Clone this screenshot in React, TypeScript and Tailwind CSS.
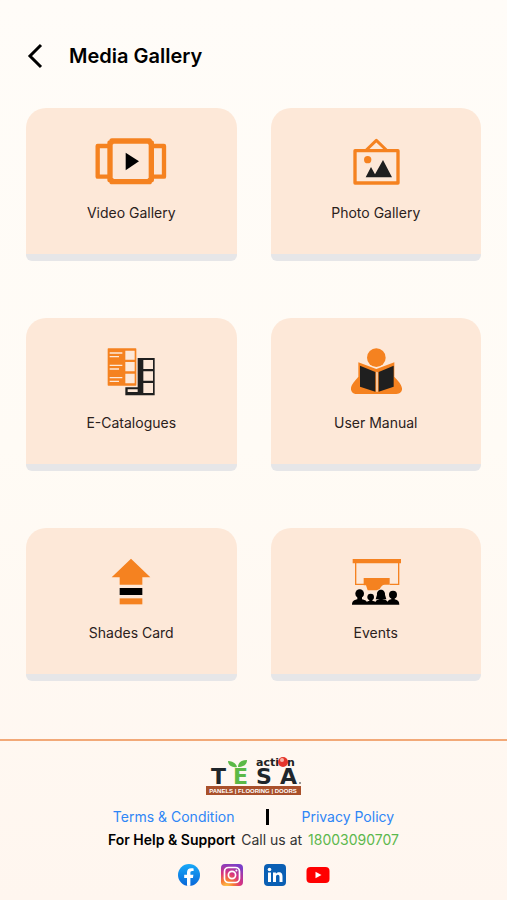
import React from 'react';

const VideoIcon = () => (
  <svg viewBox="0 0 216 144" className="w-[72px] h-12" fill="none" aria-hidden="true">
    <path d="M45 24H8v92h37M171 24h36v92h-36" stroke="#f58220" strokeWidth="13" strokeLinejoin="round" />
    <path d="M51 9h112a6 6 0 0 0 6 6v110a6 6 0 0 0-6 6H51a6 6 0 0 0-6-6V15a6 6 0 0 0 6-6z" stroke="#f58220" strokeWidth="16" strokeLinejoin="round" />
    <path d="M92 44l40 26-40 27z" fill="#000" />
  </svg>
);

const PhotoIcon = () => (
  <svg viewBox="0 0 216 144" className="w-[72px] h-12" fill="none" aria-hidden="true">
    <rect x="45" y="38" width="129" height="97" stroke="#f58220" strokeWidth="10" strokeLinejoin="round" />
    <path d="M79 36l30-29 30 29" stroke="#f58220" strokeWidth="9" strokeLinejoin="round" />
    <circle cx="83" cy="65" r="11" fill="#f58220" />
    <path d="M77 118l16-31 12 22 24-43 27 52z" fill="#1f1f1f" />
  </svg>
);

const CatalogueIcon = () => (
  <svg viewBox="0 0 216 144" className="w-[72px] h-12" aria-hidden="true">
    <path d="M128 30h51v112H91v-24h37z" fill="#1f1f1f" />
    <path d="M145 36h29v27h-29zM145 70h29v28h-29zM145 105h29v30h-29zM98 124h30v8H98z" fill="#fde8d8" />
    <rect x="38" y="1" width="86" height="112" rx="2" fill="#f58220" />
    <path d="M91 8h28v27H91zM91 42h28v28H91zM91 77h28v29H91z" fill="#fde8d8" />
    <path
      d="M44 15h38M44 26h28M44 52h38M44 63h28M44 89h38M44 100h28"
      stroke="#fde8d8"
      strokeWidth="4"
    />
  </svg>
);

const ManualIcon = () => (
  <svg viewBox="0 0 216 144" className="w-[72px] h-12" aria-hidden="true">
    <circle cx="109" cy="29" r="28" fill="#f58220" />
    <path
      d="M55 43l54 20 54-20v43c10 12 21 21 23 35 1 10-6 17-17 17H50c-12 0-18-8-17-18 2-13 13-22 22-34z"
      fill="#f58220"
    />
    <path d="M60 53l46 19v59l-46-15zM161 53l-45 19v59l45-15z" fill="#1f1f1f" />
    <path d="M109 71l4 2v58h-4z" fill="#fde8d8" />
  </svg>
);

const ShadesIcon = () => (
  <svg viewBox="0 0 216 144" className="w-[72px] h-12" aria-hidden="true">
    <path d="M108 2l58 56h-24v22H74V58H50z" fill="#f58220" />
    <path d="M74 90h68v21H74z" fill="#000" />
    <path d="M74 121h68v18H74z" fill="#f58220" />
  </svg>
);

const EventsIcon = () => (
  <svg viewBox="0 0 216 144" className="w-[72px] h-12" aria-hidden="true">
    <path d="M38 3h145v13H38z" fill="#f58220" />
    <path d="M47 15v64h27M176 15v64h-27" stroke="#f58220" strokeWidth="4" fill="none" />
    <path d="M71 60h78v20h-13c-8-1-13 5-17 13l-9 4H83l-5-15h-7z" fill="#f58220" />
    <g fill="#000">
      <circle cx="59" cy="107" r="13" />
      <circle cx="92" cy="117" r="10" />
      <path d="M123 95c9 0 13 8 12 15l4 14h-32l4-14c-1-7 3-15 12-15z" />
      <circle cx="159" cy="110" r="12" />
      <path d="M36 140c0-10 6-14 16-16v-8h14v8c8 2 12 3 14 7l8-3v-6h9v6l10 3c2-5 7-6 11-7v-8h10v8c7 1 12 3 15 7 2-4 5-6 11-7v-8h10v8c10 2 14 7 14 16z" />
    </g>
  </svg>
);

const TesaLogo = () => (
  <svg viewBox="0 0 96 40" className="w-24 h-10" role="img" aria-label="Action Tesa">
    <text x="50" y="10" fontFamily="DejaVu Sans" fontWeight="bold" fontSize="11" fill="#222">acti</text>
    <circle cx="77" cy="6" r="5" fill="#e5352b" />
    <circle cx="76" cy="4" r="2" fill="#f9b4a8" />
    <text x="81" y="10" fontFamily="DejaVu Sans" fontWeight="bold" fontSize="11" fill="#222">n</text>
    <text y="28" fontFamily="DejaVu Sans" fontWeight="bold" fontSize="22" fill="#20262b">
      <tspan x="5">T</tspan>
      <tspan x="27" fill="#5bb947">E</tspan>
      <tspan x="50">S</tspan>
      <tspan x="74">A</tspan>
    </text>
    <path d="M31 11c-1-4-5-6-9-6 0 4 4 7 9 6zM32 11c0-4 3-7 9-7 0 5-4 7-9 7z" fill="#5bb947" />
    <circle cx="94" cy="27" r="1" fill="#777" />
    <rect y="30" width="95" height="9" fill="#a9502b" />
    <text x="47" y="37" textAnchor="middle" fontFamily="Liberation Sans" fontWeight="bold" fontSize="6" fill="#fff">
      PANELS | FLOORING | DOORS
    </text>
  </svg>
);

const FacebookIcon = () => (
  <svg viewBox="0 0 24 24" className="w-6 h-6" aria-hidden="true">
    <defs>
      <linearGradient id="fb" x1="0" y1="0" x2="0" y2="1">
        <stop offset="0" stopColor="#18a9f8" />
        <stop offset="1" stopColor="#0866d8" />
      </linearGradient>
    </defs>
    <circle cx="12" cy="12" r="11" fill="url(#fb)" />
    <path d="M15.9 15l.5-3.2h-3V9.8c0-.9.4-1.7 1.8-1.7h1.4V5.4s-1.2-.2-2.5-.2c-2.5 0-4.1 1.5-4.1 4.2v2.4H7.2V15H10v7.8a11 11 0 0 0 3.4 0V15z" fill="#fff" />
  </svg>
);

const InstagramIcon = () => (
  <svg viewBox="0 0 24 24" className="w-6 h-6" aria-hidden="true">
    <defs>
      <radialGradient id="ig" cx="0.25" cy="1.05" r="1.1">
        <stop offset="0" stopColor="#ffd34f" />
        <stop offset="0.3" stopColor="#f77a35" />
        <stop offset="0.6" stopColor="#d83280" />
        <stop offset="1" stopColor="#7b3fc8" />
      </radialGradient>
    </defs>
    <rect x="1" y="1" width="22" height="22" rx="4" fill="url(#ig)" />
    <g fill="none" stroke="#fff" strokeWidth="1.7">
      <rect x="4.5" y="4.5" width="15" height="15" rx="4" />
      <circle cx="12" cy="12" r="3.6" />
    </g>
    <circle cx="16.4" cy="7.6" r="1" fill="#fff" />
  </svg>
);

const LinkedinIcon = () => (
  <svg viewBox="0 0 24 24" className="w-6 h-6" aria-hidden="true">
    <rect x="1" y="1" width="22" height="22" rx="4" fill="#0a5fb4" />
    <circle cx="6.5" cy="6.5" r="1.8" fill="#fff" />
    <path d="M5 9.5h3V19H5zM10 9.5h2.9v1.3c.5-.9 1.6-1.6 3-1.6 2.9 0 3.6 1.9 3.6 4.5V19h-3v-4.7c0-1.3-.2-2.5-1.7-2.5S13 13 13 14.3V19h-3z" fill="#fff" />
  </svg>
);

const YoutubeIcon = () => (
  <svg viewBox="0 0 24 24" className="w-6 h-6" aria-hidden="true">
    <rect x="0.5" y="4" width="23" height="16" rx="4" fill="#f00" />
    <path d="M9.5 8.7l6 3.3-6 3.3z" fill="#fff" />
  </svg>
);

const items = [
  { label: 'Video Gallery', icon: <VideoIcon /> },
  { label: 'Photo Gallery', icon: <PhotoIcon /> },
  { label: 'E-Catalogues', icon: <CatalogueIcon /> },
  { label: 'User Manual', icon: <ManualIcon /> },
  { label: 'Shades Card', icon: <ShadesIcon /> },
  { label: 'Events', icon: <EventsIcon /> },
];

const socials = [
  { label: 'Facebook', icon: <FacebookIcon /> },
  { label: 'Instagram', icon: <InstagramIcon /> },
  { label: 'LinkedIn', icon: <LinkedinIcon /> },
  { label: 'YouTube', icon: <YoutubeIcon /> },
];

const App = () => {
  return (
    <div className="min-h-screen flex flex-col bg-gradient-to-b from-[#fffcf8] via-[#fffbf5] to-[#fff6ef] font-['Inter',sans-serif] text-black">
      <header className="flex items-center gap-[25px] px-6 pt-10">
        <button type="button" aria-label="Back" className="h-8">
          <svg viewBox="0 0 20 32" className="w-5 h-8" fill="none" aria-hidden="true">
            <path d="M17 5L6 16l11 11" stroke="#000" strokeWidth="3" />
          </svg>
        </button>
        <h1 className="text-xl font-semibold">Media Gallery</h1>
      </header>

      <main className="flex-1 px-[26px] pt-9 pb-14">
        <div className="grid grid-cols-2 gap-x-[34px] gap-y-[57px]">
          {items.map((item) => (
            <button
              key={item.label}
              type="button"
              className="flex flex-col items-center h-[153px] pt-[30px] bg-[#fde8d8] rounded-t-[20px] rounded-b-md border-b-[7px] border-[#e6e6e8]"
            >
              {item.icon}
              <span className="mt-[15px] text-sm leading-6 text-[#2b211c]">{item.label}</span>
            </button>
          ))}
        </div>
      </main>

      <footer className="flex flex-col items-center border-t-2 border-[#f2a978] pt-[15px] pb-[13px]">
        <TesaLogo />
        <div className="flex items-center gap-8 mt-[9px] text-sm leading-[23px]">
          <a href="#terms" className="text-[#2f86f6]">Terms &amp; Condition</a>
          <span className="w-[3px] h-4 bg-black" />
          <a href="#privacy" className="text-[#2f86f6]">Privacy Policy</a>
        </div>
        <p className="flex gap-[6px] text-sm leading-[23px] text-[#333]">
          <span className="font-semibold text-black">For Help &amp; Support</span>
          <span>Call us at</span>
          <a href="tel:18003090707" className="text-[#5cb84c]">18003090707</a>
        </p>
        <div className="flex gap-[19px] mt-3">
          {socials.map((s) => (
            <a key={s.label} href="#social" aria-label={s.label}>{s.icon}</a>
          ))}
        </div>
      </footer>
    </div>
  );
};

export default App;
